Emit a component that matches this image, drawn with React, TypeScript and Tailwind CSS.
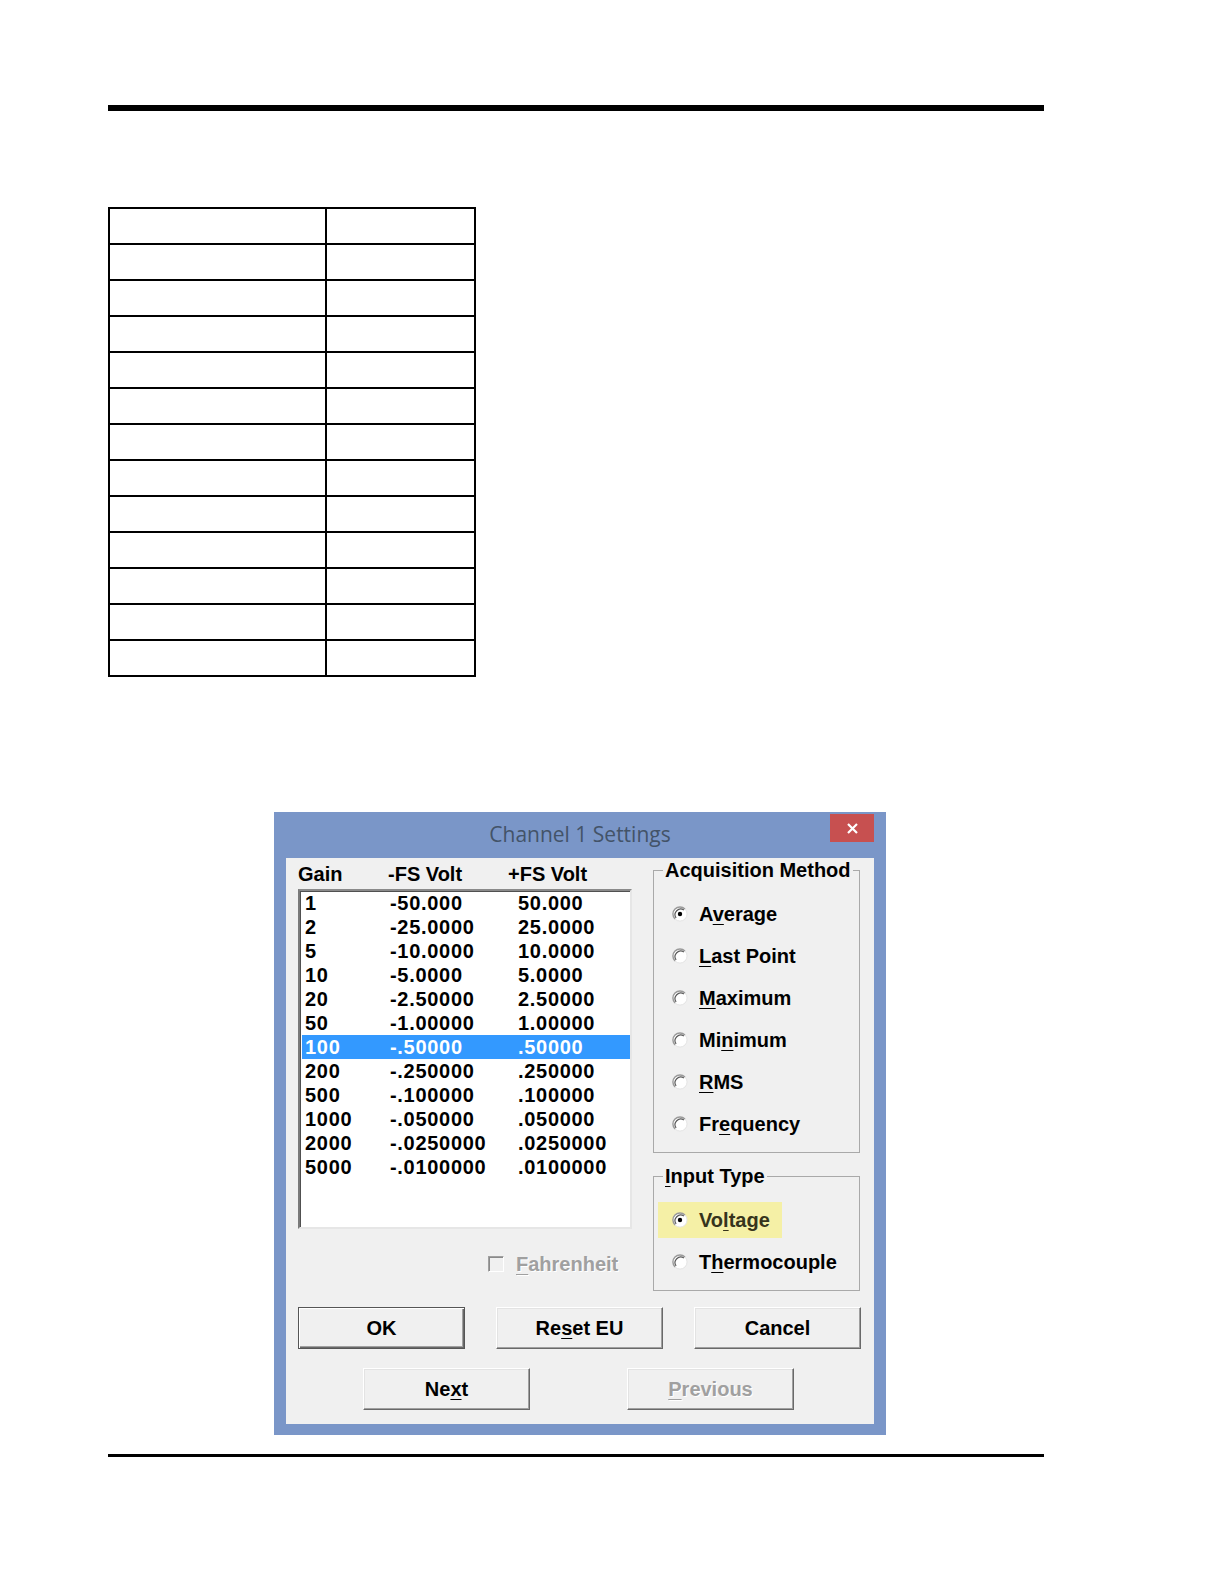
import React from "react";

const rows: [string, string, string][] = [
  ["1", "-50.000", "50.000"],
  ["2", "-25.0000", "25.0000"],
  ["5", "-10.0000", "10.0000"],
  ["10", "-5.0000", "5.0000"],
  ["20", "-2.50000", "2.50000"],
  ["50", "-1.00000", "1.00000"],
  ["100", "-.50000", ".50000"],
  ["200", "-.250000", ".250000"],
  ["500", "-.100000", ".100000"],
  ["1000", "-.050000", ".050000"],
  ["2000", "-.0250000", ".0250000"],
  ["5000", "-.0100000", ".0100000"],
];

// label + index of the access-key letter
const methods: [string, number][] = [
  ["Average", 1],
  ["Last Point", 0],
  ["Maximum", 0],
  ["Minimum", 2],
  ["RMS", 0],
  ["Frequency", 2],
];

function Key({ label, at }: { label: string; at: number }) {
  if (at < 0) return <>{label}</>;
  return (
    <>
      {label.slice(0, at)}
      <span className="underline decoration-1 underline-offset-[3px]">{label[at]}</span>
      {label.slice(at + 1)}
    </>
  );
}

function Radio({ checked }: { checked?: boolean }) {
  return (
    <svg width="16" height="16" viewBox="0 0 16 16" className="shrink-0">
      <circle cx="8" cy="8" r="7" fill="#ffffff" />
      <path d="M13 3A7 7 0 0 0 3 13" fill="none" stroke="#9a9a9a" strokeWidth="1.4" />
      <path d="M11.9 4.1A5.6 5.6 0 0 0 4.1 11.9" fill="none" stroke="#5a5a5a" strokeWidth="1.2" />
      <path d="M3 13A7 7 0 0 0 13 3" fill="none" stroke="#e4e4e4" strokeWidth="1" />
      {checked ? <circle cx="8" cy="8" r="2.2" fill="#000000" /> : null}
    </svg>
  );
}

function Button({
  children,
  primary,
  disabled,
}: {
  children: React.ReactNode;
  primary?: boolean;
  disabled?: boolean;
}) {
  const frame = primary
    ? "border border-[#555555] shadow-[inset_1px_1px_0_#ffffff,inset_-1px_-1px_0_#696969,inset_-2px_-2px_0_#a0a0a0]"
    : "border border-t-[#ffffff] border-l-[#ffffff] border-r-[#696969] border-b-[#696969] shadow-[inset_-1px_-1px_0_#a0a0a0,inset_1px_1px_0_#e3e3e3]";
  return (
    <div
      className={`w-[167px] h-[42px] flex items-center justify-center bg-[#f0f0f0] text-[20px] font-bold ${frame} ${
        disabled ? "text-[#a0a0a0] [text-shadow:1px_1px_0_#ffffff]" : "text-black"
      }`}
    >
      {children}
    </div>
  );
}

function Dialog() {
  return (
    <div className="w-[612px] h-[623px] bg-[#7a96c8] px-[12px] pb-[11px] flex flex-col">
      <div className="h-[46px] grid grid-cols-[44px_1fr_44px]">
        <div />
        <div className="flex items-center justify-center font-['Open_Sans',sans-serif] text-[21px] text-[#435368]">
          Channel 1 Settings
        </div>
        <div className="mt-[2px] h-[28px] bg-[#c75050] flex items-center justify-center">
          <svg width="11" height="11" viewBox="0 0 11 11">
            <path d="M1 1L10 10M10 1L1 10" stroke="#ffffff" strokeWidth="2.2" />
          </svg>
        </div>
      </div>

      <div className="flex-1 bg-[#f0f0f0] pl-[12px] flex flex-col">
        <div className="flex gap-[21px]">
          {/* gain list */}
          <div className="w-[334px] flex flex-col">
            <div className="h-[31px] flex items-center text-[20px] font-bold">
              <span className="w-[90px]">Gain</span>
              <span className="w-[120px]">-FS Volt</span>
              <span>+FS Volt</span>
            </div>
            <div className="h-[340px] bg-white border-2 border-t-[#8a8a8a] border-l-[#7a7a7a] border-r-[#e6e6e6] border-b-[#e6e6e6] shadow-[inset_1px_1px_0_#505050]">
              {rows.map(([g, lo, hi]) => (
                <div
                  key={g}
                  className={`h-[24px] ml-[2px] pl-[3px] flex items-center text-[20px] font-bold tracking-[0.7px] ${
                    g === "100" ? "bg-[#3399ff] text-white" : "text-black"
                  }`}
                >
                  <span className="w-[85px]">{g}</span>
                  <span className="w-[128px]">{lo}</span>
                  <span>{hi}</span>
                </div>
              ))}
            </div>
            <div className="mt-[23px] h-[24px] pl-[190px] flex items-center gap-[12px]">
              <div className="w-[16px] h-[16px] border border-t-[#a0a0a0] border-l-[#a0a0a0] border-r-[#ffffff] border-b-[#ffffff] shadow-[inset_1px_1px_0_#8a8a8a]" />
              <span className="text-[20px] font-bold text-[#a0a0a0] [text-shadow:1px_1px_0_#ffffff]">
                <Key label="Fahrenheit" at={0} />
              </span>
            </div>
          </div>

          {/* option groups */}
          <div className="w-[207px] flex flex-col">
            <fieldset className="h-[295px] border border-[#a9a9a9] px-0 pb-0 m-0">
              <legend className="ml-[9px] px-[2px] text-[20px] leading-[24px] font-bold">
                Acquisition Method
              </legend>
              <div className="pt-[11px] flex flex-col">
                {methods.map(([m, at], i) => (
                  <div key={m} className="h-[42px] pl-[18px] flex items-center gap-[11px] text-[20px] font-bold">
                    <Radio checked={i === 0} />
                    <span>
                      <Key label={m} at={at} />
                    </span>
                  </div>
                ))}
              </div>
            </fieldset>

            <fieldset className="mt-[11px] h-[127px] border border-[#a9a9a9] px-0 pb-0 m-0">
              <legend className="ml-[9px] px-[2px] text-[20px] leading-[24px] font-bold">
                <Key label="Input Type" at={0} />
              </legend>
              <div className="pt-[11px] flex flex-col">
                <div className="h-[42px] flex items-center">
                  <div className="ml-[4px] w-[124px] h-[36px] bg-[#f5f0a6] pl-[14px] flex items-center gap-[11px] text-[20px] font-bold text-[#36341c]">
                    <Radio checked />
                    <span>
                      <Key label="Voltage" at={2} />
                    </span>
                  </div>
                </div>
                <div className="h-[42px] pl-[18px] flex items-center gap-[11px] text-[20px] font-bold">
                  <Radio />
                  <span>
                    <Key label="Thermocouple" at={1} />
                  </span>
                </div>
              </div>
            </fieldset>
          </div>
        </div>

        <div className="mt-[16px] flex gap-[31px]">
          <Button primary>OK</Button>
          <Button>
            <Key label="Reset EU" at={2} />
          </Button>
          <Button>Cancel</Button>
        </div>
        <div className="mt-[19px] ml-[65px] flex gap-[97px]">
          <Button>
            <Key label="Next" at={2} />
          </Button>
          <Button disabled>
            <Key label="Previous" at={0} />
          </Button>
        </div>
      </div>
    </div>
  );
}

export default function App() {
  return (
    <div className="w-[1224px] h-[1584px] bg-white font-['Liberation_Sans',Arial,sans-serif] text-black">
      <div className="pt-[105px] pl-[108px]">
        <div className="w-[936px] h-[6px] bg-black" />

        <table className="mt-[96px] border-collapse w-[368px]">
          <tbody>
            {Array.from({ length: 13 }).map((_, i) => (
              <tr key={i}>
                <td className="w-[217px] h-[36px] border-2 border-black p-0" />
                <td className="h-[36px] border-2 border-black p-0" />
              </tr>
            ))}
          </tbody>
        </table>

        <div className="mt-[135px] ml-[166px]">
          <Dialog />
        </div>

        <div className="mt-[19px] w-[936px] h-[3px] bg-black" />
      </div>
    </div>
  );
}
